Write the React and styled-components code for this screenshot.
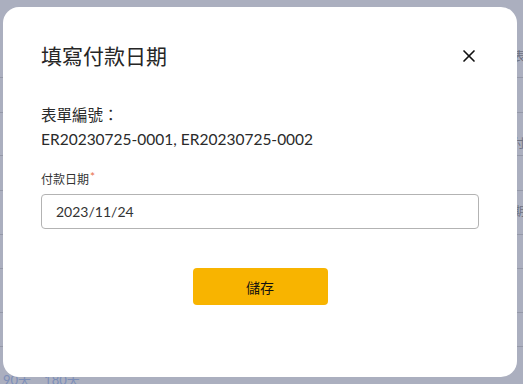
import React, { useState } from 'react'
import styled, { createGlobalStyle } from 'styled-components'
import { X } from 'lucide-react'

const GlobalStyle = createGlobalStyle`
  * { box-sizing: border-box; }
  html, body { margin: 0; padding: 0; }
  body {
    font-family: Lato, "Noto Sans CJK TC", sans-serif;
    background: #ffffff;
    overflow: hidden;
  }
`

const bgRows = [
  { h: 78, text: '表', pad: 50 },
  { h: 35 },
  { h: 43, text: '付', pad: 24 },
  { h: 35 },
  { h: 44, text: '期', pad: 14 },
  { h: 34 },
  { h: 44 },
  { h: 34 },
]

const Page = styled.div`
  width: 523px;
  height: 384px;
  overflow: hidden;
`

const BgRow = styled.div`
  display: flex;
  justify-content: flex-end;
  height: ${p => p.$h}px;
  border-bottom: 1px solid #d9d9d9;
`

const BgCell = styled.div`
  width: 10px;
  padding-top: ${p => p.$pad || 0}px;
  font-size: 12px;
  line-height: 14px;
  color: #999;
  white-space: nowrap;
`

const BgFoot = styled.div`
  display: flex;
  gap: 13px;
  margin-top: 25px;
  padding-left: 3px;
  font-size: 13px;
  line-height: 16px;
  color: #b1c9f4;
`

const Overlay = styled.div`
  position: fixed;
  inset: 0;
  background: rgba(44, 56, 94, 0.4);
  padding: 7px 0 0 3px;
`

const Modal = styled.div`
  width: 514px;
  background: #fff;
  border-radius: 16px;
  padding: 37px 38px 72px 38px;
  display: flex;
  flex-direction: column;
`

const Header = styled.div`
  display: flex;
  justify-content: space-between;
  align-items: center;
  height: 24px;
`

const Title = styled.h2`
  margin: 0;
  font-size: 21px;
  font-weight: 400;
  color: #262626;
  line-height: 24px;
`

const CloseBtn = styled.button`
  border: none;
  background: none;
  padding: 0;
  width: 24px;
  height: 24px;
  display: flex;
  align-items: center;
  justify-content: center;
  margin-right: -2px;
  color: #111;
  cursor: pointer;
`

const Info = styled.div`
  margin-top: 35px;
  font-size: 15.5px;
  line-height: 24px;
  color: #2a2a2a;
`

const Field = styled.div`
  margin-top: 20px;
  display: flex;
  flex-direction: column;
  gap: 5px;
`

const Label = styled.label`
  font-size: 12px;
  line-height: 18px;
  color: #333;
  sup {
    color: #e8704a;
    font-size: 12px;
    vertical-align: top;
    line-height: 12px;
    margin-left: 1px;
  }
`

const Input = styled.input`
  width: 100%;
  height: 35px;
  border: 1px solid #b3b3b3;
  border-radius: 4px;
  padding: 0 14px;
  font-family: Lato, "Noto Sans CJK TC", sans-serif;
  font-size: 14px;
  color: #333;
  outline: none;
`

const Actions = styled.div`
  display: flex;
  justify-content: center;
  margin-top: 39px;
`

const SaveBtn = styled.button`
  width: 135px;
  height: 37px;
  border: none;
  border-radius: 4px;
  background: #f8b400;
  font-family: Lato, "Noto Sans CJK TC", sans-serif;
  font-size: 14px;
  color: #111;
  cursor: pointer;
`

const App = () => {
  const [date, setDate] = useState('2023/11/24')

  return (
    <>
      <GlobalStyle />
      <Page>
        {bgRows.map((r, i) => (
          <BgRow key={i} $h={r.h}>
            <BgCell $pad={r.pad}>{r.text}</BgCell>
          </BgRow>
        ))}
        <BgFoot>
          <span>90天</span>
          <span>180天</span>
        </BgFoot>
      </Page>
      <Overlay>
        <Modal>
          <Header>
            <Title>填寫付款日期</Title>
            <CloseBtn aria-label="close">
              <X size={20} strokeWidth={2} />
            </CloseBtn>
          </Header>
          <Info>
            <div>表單編號：</div>
            <div>ER20230725-0001, ER20230725-0002</div>
          </Info>
          <Field>
            <Label>付款日期<sup>*</sup></Label>
            <Input value={date} onChange={e => setDate(e.target.value)} />
          </Field>
          <Actions>
            <SaveBtn>儲存</SaveBtn>
          </Actions>
        </Modal>
      </Overlay>
    </>
  )
}

export default App
